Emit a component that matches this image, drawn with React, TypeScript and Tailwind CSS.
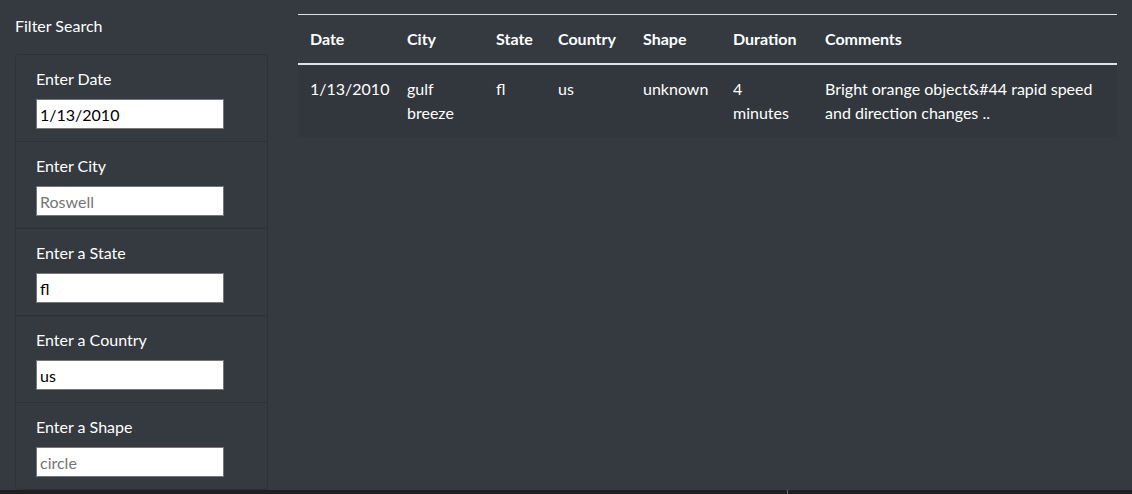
import React from 'react';

const filters = [
  { label: 'Enter Date', value: '1/13/2010', placeholder: '' },
  { label: 'Enter City', value: '', placeholder: 'Roswell' },
  { label: 'Enter a State', value: 'fl', placeholder: '' },
  { label: 'Enter a Country', value: 'us', placeholder: '' },
  { label: 'Enter a Shape', value: '', placeholder: 'circle' },
];

const columns = [
  { name: 'Date', w: 'w-[97px]' },
  { name: 'City', w: 'w-[89px]' },
  { name: 'State', w: 'w-[62px]' },
  { name: 'Country', w: 'w-[85px]' },
  { name: 'Shape', w: 'w-[90px]' },
  { name: 'Duration', w: 'w-[92px]' },
  { name: 'Comments', w: '' },
];

const rows = [
  ['1/13/2010', 'gulf breeze', 'fl', 'us', 'unknown', '4 minutes', 'Bright orange object&#44 rapid speed and direction changes ..'],
];

const App: React.FC = () => {
  return (
    <div className="h-[494px] bg-[#1e1f20] overflow-hidden font-['Lato','Open_Sans',sans-serif] text-white text-[16px] leading-6">
      <div className="h-[490px] bg-[#343a40] flex">
        {/* sidebar */}
        <div className="w-[283px] pl-[15px] pr-[15px] pt-[14px]">
          <div className="mb-4">Filter Search</div>
          <ul className="border border-[#2d3237] rounded-[4px]">
            {filters.map((f, i) => (
              <li
                key={f.label}
                className={`px-5 py-3 ${i > 0 ? 'border-t border-[#2d3237]' : ''}`}
              >
                <label className="block mb-2">{f.label}</label>
                <input
                  type="text"
                  defaultValue={f.value}
                  placeholder={f.placeholder}
                  className="block w-[188px] h-[30px] bg-white border border-[#767676] px-[3px] text-black placeholder:text-[#757575] outline-none"
                />
              </li>
            ))}
          </ul>
        </div>

        {/* results table */}
        <div className="flex-1 pl-[15px] pr-[15px] pt-[14px]">
          <table className="w-full table-fixed border-t border-[#dee2e6] text-left">
            <thead>
              <tr className="border-b-2 border-[#dee2e6]">
                {columns.map((c) => (
                  <th key={c.name} className={`${c.w} px-3 py-3 font-bold align-bottom`}>
                    {c.name}
                  </th>
                ))}
              </tr>
            </thead>
            <tbody>
              {rows.map((r, i) => (
                <tr key={i} className="bg-black/5">
                  {r.map((cell, j) => (
                    <td key={j} className="px-3 py-3 align-top">
                      {cell}
                    </td>
                  ))}
                </tr>
              ))}
            </tbody>
          </table>
        </div>
      </div>
      <div className="h-[4px] flex">
        <div className="ml-[787px] w-px bg-[#6b6b6b]" />
      </div>
    </div>
  );
};

export default App;
